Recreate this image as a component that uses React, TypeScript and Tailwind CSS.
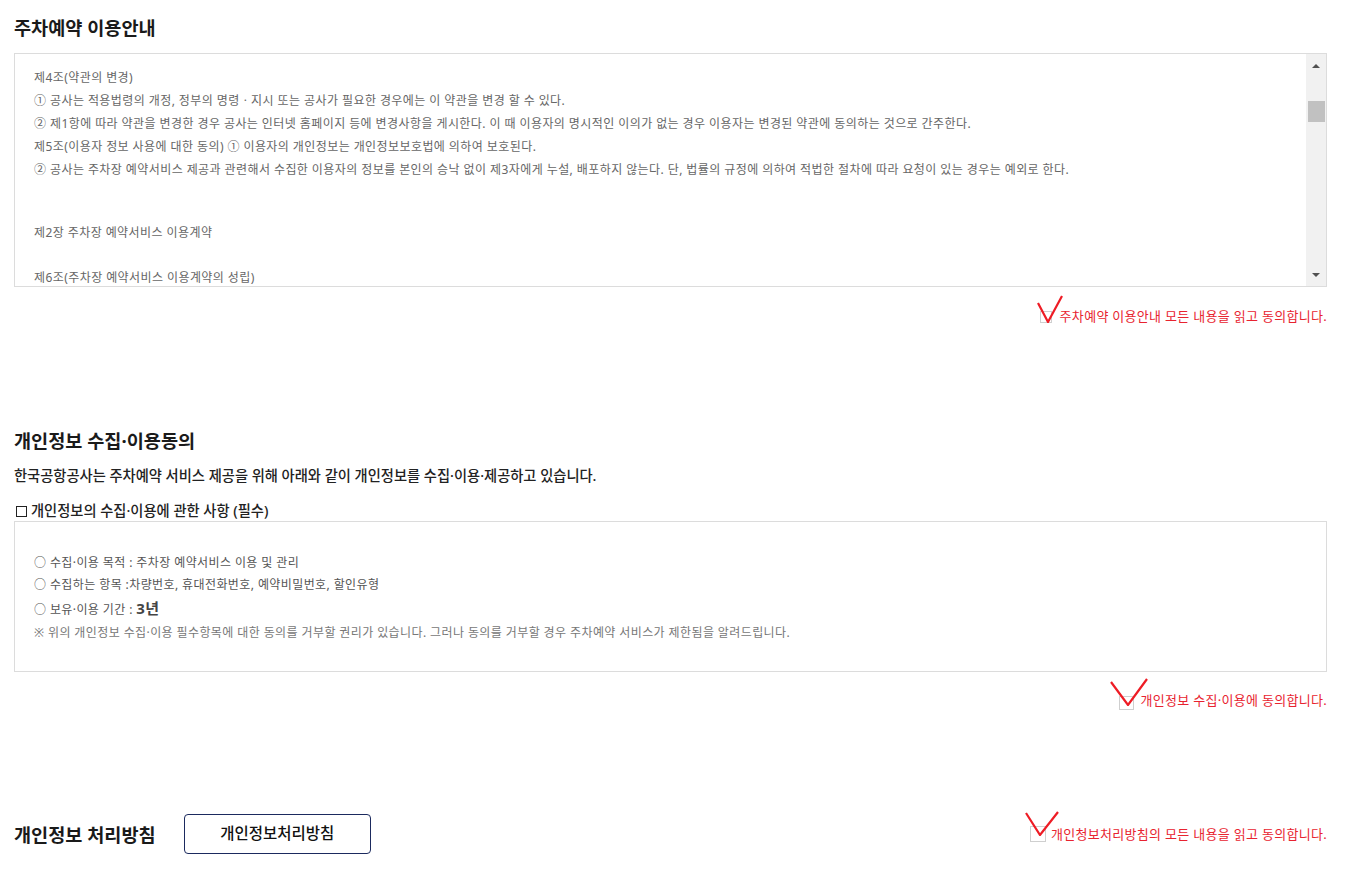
import React from 'react';

const KR = { fontFamily: '"Noto Sans", "Noto Sans CJK KR", sans-serif' };

interface AgreeProps {
  label: string;
  box: string;
  gap: string;
  check: { className: string; w: number; h: number; points: string };
}

const AgreeRow: React.FC<AgreeProps> = ({ label, box, gap, check }) => {
  return (
    <div className="flex justify-end items-center">
      <span className={`relative inline-block border border-[#cfcfcf] bg-white ${box}`}>
        <svg className={`absolute ${check.className}`} width={check.w} height={check.h} viewBox={`0 0 ${check.w} ${check.h}`}>
          <polyline points={check.points} fill="none" stroke="#ee1c25" strokeWidth="2.2" strokeLinejoin="miter" />
        </svg>
      </span>
      <span className={`${gap} text-[13px] text-[#e8232f] tracking-[0.3px] leading-[20px]`}>{label}</span>
    </div>
  );
};

const termsLines = [
  '제4조(약관의 변경)',
  '① 공사는 적용법령의 개정, 정부의 명령ㆍ지시 또는 공사가 필요한 경우에는 이 약관을 변경 할 수 있다.',
  '② 제1항에 따라 약관을 변경한 경우 공사는 인터넷 홈페이지 등에 변경사항을 게시한다. 이 때 이용자의 명시적인 이의가 없는 경우 이용자는 변경된 약관에 동의하는 것으로 간주한다.',
  '제5조(이용자 정보 사용에 대한 동의) ① 이용자의 개인정보는 개인정보보호법에 의하여 보호된다.',
  '② 공사는 주차장 예약서비스 제공과 관련해서 수집한 이용자의 정보를 본인의 승낙 없이 제3자에게 누설, 배포하지 않는다. 단, 법률의 규정에 의하여 적법한 절차에 따라 요청이 있는 경우는 예외로 한다.',
];

export default function App() {
  return (
    <div className="bg-white min-h-[889px] pl-[14px] pr-[34px] text-[#222]" style={KR}>
      {/* 주차예약 이용안내 */}
      <h2 className="pt-[14px] text-[18.6px] leading-[27px] font-bold text-[#1a1a1a]">주차예약 이용안내</h2>
      <div className="mt-[12px] h-[234px] border border-[#dcdcdc] flex overflow-hidden">
        <div className="flex-1 pl-[19px] pt-[12px] text-[12px] leading-[23px] text-[#666] tracking-[0.42px]">
          {termsLines.map((l, i) => (
            <p key={i} className="whitespace-nowrap">{l}</p>
          ))}
          <p className="mt-[40px]">제2장 주차장 예약서비스 이용계약</p>
          <p className="mt-[22px]">제6조(주차장 예약서비스 이용계약의 성립)</p>
        </div>
        <div className="w-[20px] bg-[#f1f1f1] flex flex-col items-center">
          <div className="h-[23px] flex items-center justify-center">
            <span className="w-0 h-0 border-l-[4px] border-r-[4px] border-b-[4px] border-l-transparent border-r-transparent border-b-[#505050]" />
          </div>
          <div className="mt-[24px] w-[17px] h-[21px] bg-[#c1c1c1]" />
          <div className="flex-1" />
          <div className="h-[23px] flex items-center justify-center">
            <span className="w-0 h-0 border-l-[4px] border-r-[4px] border-t-[4px] border-l-transparent border-r-transparent border-t-[#505050]" />
          </div>
        </div>
      </div>
      <div className="mt-[19px]">
        <AgreeRow
          label="주차예약 이용안내 모든 내용을 읽고 동의합니다."
          box="w-[12px] h-[12px] mt-[2px]"
          gap="ml-[8px]"
          check={{ className: '-left-[4px] -top-[17px]', w: 26, h: 28, points: '1,8 11,27 25,1' }}
        />
      </div>

      {/* 개인정보 수집·이용동의 */}
      <h2 className="mt-[101px] text-[18.6px] leading-[27px] font-bold text-[#1a1a1a]">개인정보 수집·이용동의</h2>
      <p className="mt-[12px] text-[14.25px] leading-[20px] font-medium text-[#222]">
        한국공항공사는 주차예약 서비스 제공을 위해 아래와 같이 개인정보를 수집·이용·제공하고 있습니다.
      </p>
      <p className="mt-[15px] flex items-center text-[14.25px] leading-[20px] font-medium text-[#222]">
        <span className="inline-block ml-[2px] mr-[4px] w-[11px] h-[11px] border border-[#222]" />
        개인정보의 수집·이용에 관한 사항 (필수)
      </p>
      <div className="h-[151px] border border-[#dcdcdc] pl-[19px] pt-[30px] text-[12px] text-[#555] tracking-[0.4px]">
        <p className="leading-[22px]">○ 수집·이용 목적 : 주차장 예약서비스 이용 및 관리</p>
        <p className="leading-[22px]">○ 수집하는 항목 :차량번호, 휴대전화번호, 예약비밀번호, 할인유형</p>
        <p className="leading-[24px]">
          ○ 보유·이용 기간 : <b className="text-[15px] font-bold text-[#444]">3년</b>
        </p>
        <p className="leading-[22px] text-[#777]">※ 위의 개인정보 수집·이용 필수항목에 대한 동의를 거부할 권리가 있습니다. 그러나 동의를 거부할 경우 주차예약 서비스가 제한됨을 알려드립니다.</p>
      </div>
      <div className="mt-[18px]">
        <AgreeRow
          label="개인정보 수집·이용에 동의합니다."
          box="w-[15px] h-[14px] mt-[6px]"
          gap="ml-[6px]"
          check={{ className: '-left-[10px] -top-[19px]', w: 38, h: 28, points: '1,4 18,27 37,1' }}
        />
      </div>

      {/* 개인정보 처리방침 */}
      <div className="mt-[104px] flex items-center justify-between">
        <div className="flex items-center">
          <h2 className="text-[18.6px] leading-[27px] font-bold text-[#1a1a1a]">개인정보 처리방침</h2>
          <button className="ml-[28px] w-[187px] h-[40px] border border-[#1b2a5e] rounded-[4px] bg-white text-[15.5px] font-medium text-[#111]">
            개인정보처리방침
          </button>
        </div>
        <AgreeRow
          label="개인청보처리방침의 모든 내용을 읽고 동의합니다."
          box="w-[16px] h-[16px] mt-[0px]"
          gap="ml-[5px]"
          check={{ className: '-left-[6px] -top-[16px]', w: 34, h: 25, points: '1,2 15,24 33,1' }}
        />
      </div>
    </div>
  );
}
